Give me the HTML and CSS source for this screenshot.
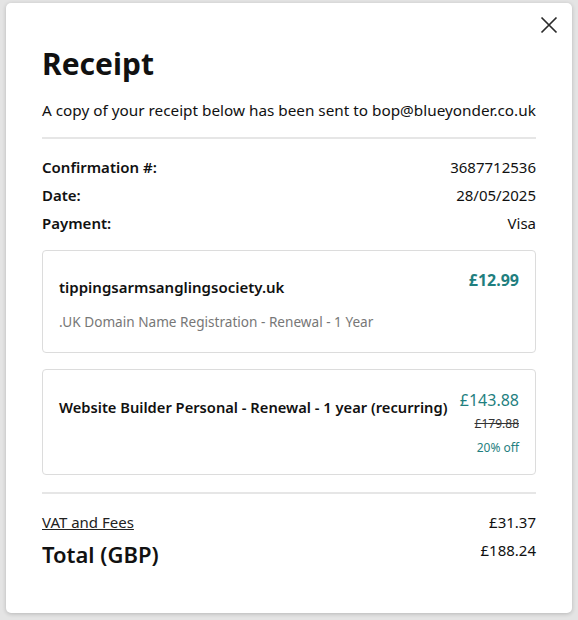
FILE: index.html
```html
<!DOCTYPE html>
<html lang="en">
<head>
    <meta charset="UTF-8">
    <meta name="viewport" content="width=device-width, initial-scale=1.0">
    <title>Receipt</title>
    <link rel="stylesheet" href="styles.css">
</head>
<body>

    <div class="modal">
        <button class="close-btn" aria-label="Close">
            <svg width="18" height="18" viewBox="0 0 18 18">
                <path d="M1.5 1.5 L16.5 16.5 M16.5 1.5 L1.5 16.5" stroke="#2b2b2b" stroke-width="1.7" fill="none"/>
            </svg>
        </button>

        <h1 class="title">Receipt</h1>
        <p class="intro">A copy of your receipt below has been sent to bop@blueyonder.co.uk</p>

        <hr class="divider">

        <div class="details">
            <div class="row"><span class="label">Confirmation #:</span><span>3687712536</span></div>
            <div class="row"><span class="label">Date:</span><span>28/05/2025</span></div>
            <div class="row"><span class="label">Payment:</span><span>Visa</span></div>
        </div>

        <div class="item item-first">
            <div class="item-main">
                <div class="item-name">tippingsarmsanglingsociety.uk</div>
                <div class="item-desc">.UK Domain Name Registration - Renewal - 1 Year</div>
            </div>
            <div class="item-price bold">£12.99</div>
        </div>

        <div class="item item-second">
            <div class="item-main">
                <div class="item-name">Website Builder Personal - Renewal - 1 year (recurring)</div>
            </div>
            <div class="item-prices">
                <div class="item-price">£143.88</div>
                <div class="old-price">£179.88</div>
                <div class="discount">20% off</div>
            </div>
        </div>

        <hr class="divider divider-bottom">

        <div class="row fees">
            <a href="#" class="fees-link">VAT and Fees</a>
            <span>£31.37</span>
        </div>
        <div class="row total">
            <span class="total-label">Total (GBP)</span>
            <span class="total-value">£188.24</span>
        </div>
    </div>

</body>
</html>
```

FILE: styles.css
```css
/* Trang nền */
body {
    margin: 0;
    padding: 3px 6px 7px 6px;
    background: #e4e4e4;
    font-family: "Noto Sans", "Liberation Sans", sans-serif;
    color: #111;
}

/* Hộp biên lai */
.modal {
    position: relative;
    background: white;
    border-radius: 5px;
    box-shadow: 0 1px 4px rgba(0, 0, 0, 0.2);
    padding: 42px 36px 44px 36px;
    height: 524px;
}

.close-btn {
    position: absolute;
    top: 13px;
    right: 14px;
    background: transparent;
    border: none;
    padding: 0;
    cursor: pointer;
}

.title {
    margin: 0;
    font-size: 30px;
    font-weight: 700;
    line-height: 38px;
}

.intro {
    margin: 16px 0 0 0;
    font-size: 15.3px;
    line-height: 22px;
}

.divider {
    border: none;
    border-top: 2px solid #e6e6e6;
    margin: 16px 0 0 0;
}

/* Hàng thông tin */
.details {
    margin-top: 17px;
}

.row {
    display: flex;
    justify-content: space-between;
    font-size: 15px;
    line-height: 22px;
    margin-bottom: 6px;
}

.label {
    font-weight: 600;
}

/* Các mục */
.item {
    display: flex;
    justify-content: space-between;
    align-items: flex-start;
    gap: 12px;
    border: 1px solid #dcdcdc;
    border-radius: 4px;
    padding: 18px 16px 20px 16px;
}

.item-first {
    margin-top: 16px;
}

.item-second {
    margin-top: 16px;
    padding: 19px 16px 16px 16px;
}

.item-name {
    font-size: 15px;
    font-weight: 600;
    line-height: 22px;
    margin-top: 7px;
}

.item-second .item-name {
    font-size: 14.7px;
    white-space: nowrap;
}

.item-desc {
    font-size: 13.6px;
    color: #777;
    margin-top: 14px;
    line-height: 20px;
}

.item-prices {
    text-align: right;
}

.item-price {
    color: #1f7f7f;
    font-size: 16px;
    line-height: 22px;
}

.bold {
    font-weight: 700;
}

.old-price {
    font-size: 12px;
    color: #333;
    text-decoration: line-through;
    margin-top: 3px;
    line-height: 20px;
}

.discount {
    font-size: 12px;
    color: #1f7f7f;
    margin-top: 4px;
    line-height: 20px;
}

/* Tổng */
.divider-bottom {
    margin-top: 17px;
}

.fees {
    margin-top: 17px;
}

.fees-link {
    color: #222;
    font-size: 15px;
}

.total {
    align-items: flex-start;
}

.total-label {
    font-size: 22px;
    font-weight: 600;
    line-height: 30px;
}

.total-value {
    font-size: 15px;
    line-height: 22px;
}
```
